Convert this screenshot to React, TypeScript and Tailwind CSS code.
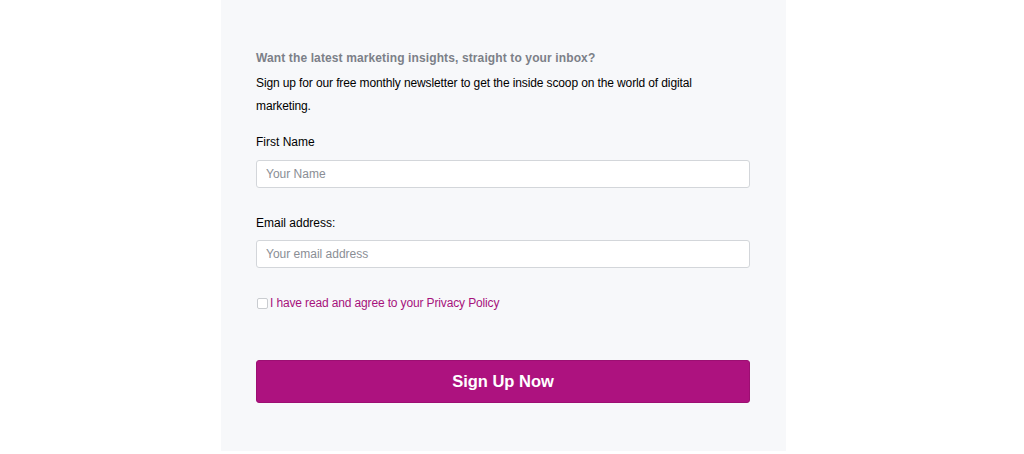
import React from "react";

export default function App() {
  return (
    <div className="w-[1024px] h-[454px] bg-white flex justify-center overflow-hidden" style={{ fontFamily: '"Liberation Sans", Arial, sans-serif' }}>
      <div className="w-[565px] h-[451px] bg-[#f7f8fa] px-[35px] pt-[47px] ml-[-17px]">
        <p className="text-[12px] leading-[23px] font-bold text-[#7c8088] tracking-[0.12px]">Want the latest marketing insights, straight to your inbox?</p>
        <p className="text-[12px] leading-[23px] text-black mt-[2px] tracking-[-0.12px] max-w-[470px]">Sign up for our free monthly newsletter to get the inside scoop on the world of digital marketing.</p>
        <label className="block text-[12px] leading-[20px] text-black mt-[14px]">First Name</label>
        <input className="block w-[494px] h-[28px] mt-[8px] bg-white border border-[#d3d6da] rounded-[3px] px-[9px] text-[12px] placeholder:text-[#8a8e95] outline-none" placeholder="Your Name" />
        <label className="block text-[12px] leading-[20px] text-black mt-[25px]">Email address:</label>
        <input className="block w-[494px] h-[28px] mt-[7px] bg-white border border-[#d3d6da] rounded-[3px] px-[9px] text-[12px] placeholder:text-[#8a8e95] outline-none" placeholder="Your email address" />
        <div className="flex items-center mt-[27px] h-[16px]">
          <span className="w-[11px] h-[11px] ml-[1px] border border-[#c9ccd0] rounded-[2px] bg-white" />
          <span className="text-[12px] text-[#a6127c] ml-[2px] tracking-[-0.14px]">I have read and agree to your Privacy Policy</span>
        </div>
        <button className="block w-[494px] h-[43px] mt-[49px] bg-[#ad127f] rounded-[3px] border border-[#9c0f72] text-white font-bold text-[16.5px]">Sign Up Now</button>
      </div>
    </div>
  );
}
